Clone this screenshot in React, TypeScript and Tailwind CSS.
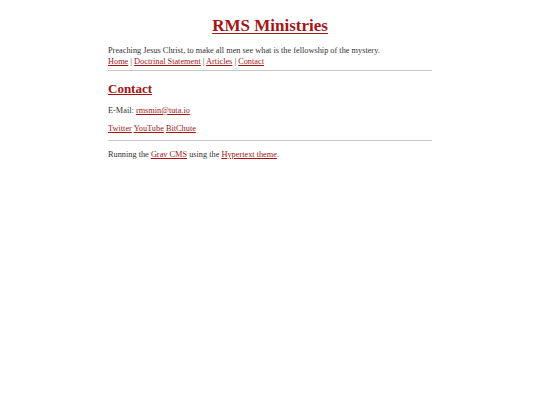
export default function App() {
  const link = "text-[#a31515] underline underline-offset-1";
  return (
    <div className="min-h-[405px] bg-white font-['Liberation_Serif',serif] text-[#333] text-[8.3px] leading-[11px]">
      <div className="w-[324px] mx-auto pt-[16px]">
        <h1 className="text-center text-[17px] leading-[20px] font-bold">
          <a href="#" className="text-[#a31515] underline underline-offset-2">
            RMS Ministries
          </a>
        </h1>
        <p className="mt-[9px]">
          Preaching Jesus Christ, to make all men see what is the fellowship of the mystery.
        </p>
        <nav>
          <a href="#" className={link}>Home</a> |{" "}
          <a href="#" className={link}>Doctrinal Statement</a> |{" "}
          <a href="#" className={link}>Articles</a> |{" "}
          <a href="#" className={link}>Contact</a>
        </nav>
        <hr className="mt-[3px] border-t border-[#c8c8c8]" />

        <h2 className="mt-[11px] text-[13px] leading-[14px] font-bold">
          <a href="#" className="text-[#a31515] underline underline-offset-1">Contact</a>
        </h2>
        <p className="mt-[9px]">
          E-Mail: <a href="#" className={link}>rmsmin@tuta.io</a>
        </p>
        <p className="mt-[7px]">
          <a href="#" className={link}>Twitter</a>{" "}
          <a href="#" className={link}>YouTube</a>{" "}
          <a href="#" className={link}>BitChute</a>
        </p>
        <hr className="mt-[6px] border-t border-[#c8c8c8]" />
        <p className="mt-[8px]">
          Running the <a href="#" className={link}>Grav CMS</a> using the{" "}
          <a href="#" className={link}>Hypertext theme</a>.
        </p>
      </div>
    </div>
  );
}
